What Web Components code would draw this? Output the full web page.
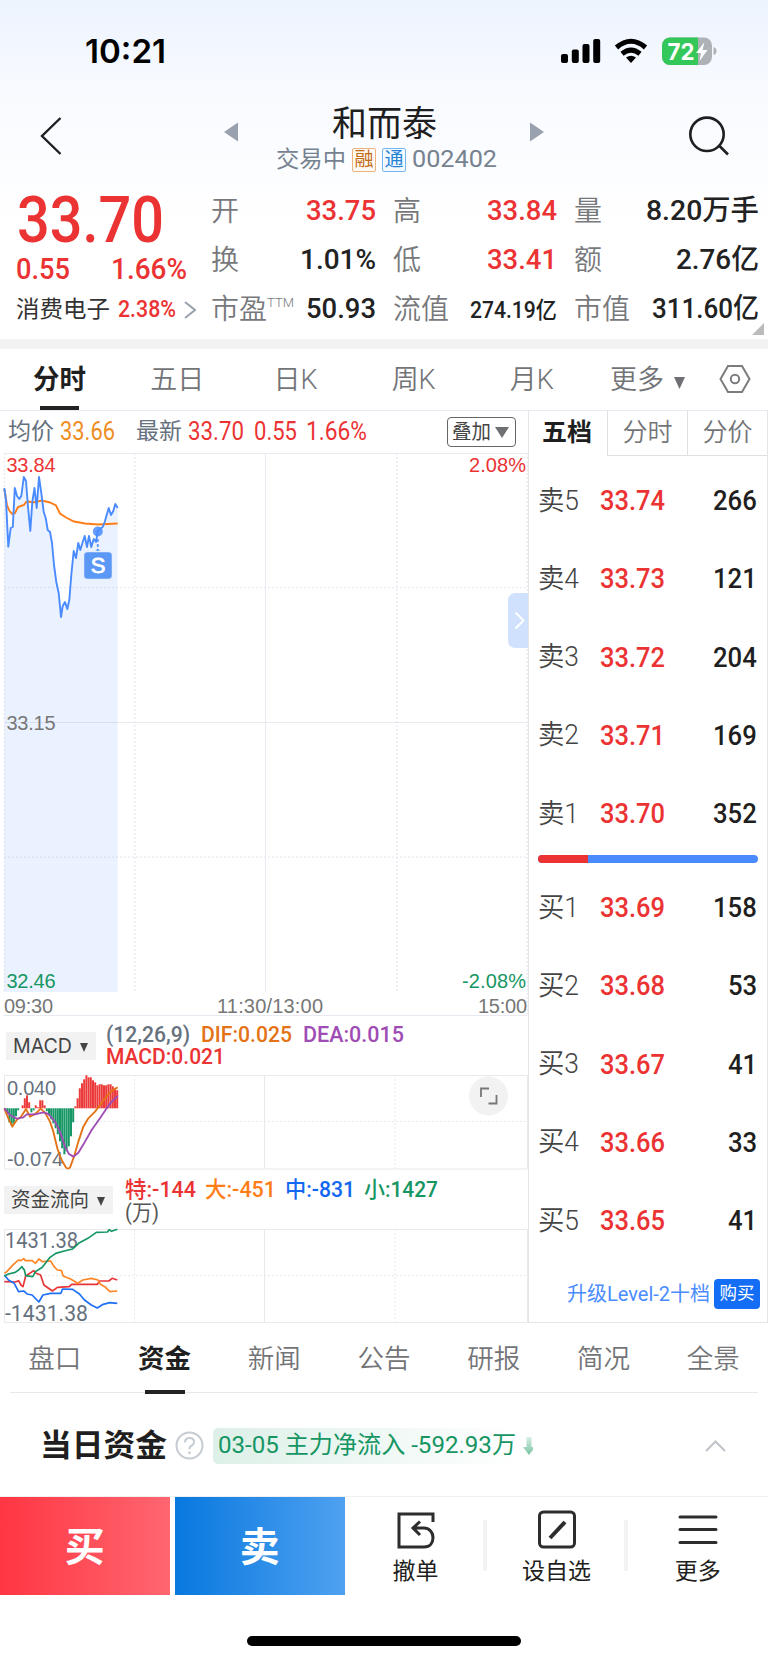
<!DOCTYPE html>
<html lang="zh-CN">
<head>
<meta charset="utf-8">
<title>和而泰 002402</title>
<style>
  body {
    margin: 0;
    width: 768px;
    height: 1663px;
    overflow: hidden;
    background: #fff linear-gradient(#edf4fe, #f8faff 90px, #fff 230px) no-repeat;
    color: #222;
    font-family: Roboto, "Noto Sans CJK SC", sans-serif;
    -webkit-font-smoothing: antialiased;
  }
</style>
</head>
<body>
<stock-page></stock-page>

<script>
const UP = "#eb3333";
const DOWN = "#159663";

function define(name, html, setup) {
  const template = document.createElement("template");
  template.innerHTML = html;
  customElements.define(
    name,
    class extends HTMLElement {
      constructor() {
        super();
        this.attachShadow({ mode: "open" }).appendChild(
          template.content.cloneNode(true)
        );
      }
      connectedCallback() {
        if (setup) setup(this, this.shadowRoot);
      }
    }
  );
}

/* Text squeezed or stretched horizontally to the width given in "w". */
define(
  "fit-text",
  `
<style>
  :host { display: inline-block; white-space: nowrap; line-height: 1.2; flex: none; text-align: left; }
  span { display: inline-block; transform-origin: 0 50%; }
</style>
<span><slot></slot></span>`,
  (host, root) => {
    const width = Number(host.getAttribute("w"));
    const span = root.querySelector("span");
    host.style.width = `${width}px`;
    span.style.transform = `scaleX(${width / span.getBoundingClientRect().width})`;
  }
);

define(
  "status-bar",
  `
<style>
  :host { display: flex; align-items: center; height: 103px; box-sizing: border-box; padding: 0 51px 2px 85px; color: #000; }
  .time { font: 600 33px Inter, sans-serif; margin-right: auto; }
  svg { display: block; }
</style>
<fit-text class="time" w="81">10:21</fit-text>
<svg width="157" height="30" viewBox="560 36 157 30">
  <g><rect x="561" y="54" width="7" height="9" rx="2"/><rect x="571.8" y="49.500" width="7" height="13.500" rx="2"/>
  <rect x="582.5" y="44" width="7" height="19" rx="2"/><rect x="593.200" y="39" width="7" height="24" rx="2"/></g>
  <g fill="none" stroke="#000" stroke-width="5">
    <path d="M616.500 47.500Q631 35 645.500 47.500"/><path d="M622 53.700Q631 46.500 640 53.700"/>
  </g>
  <path d="M626 57.500Q631 54 636 57.500L631 63Z"/>
  <clipPath id="b"><rect x="662" y="37.500" width="50" height="27.500" rx="8"/></clipPath>
  <g clip-path="url(#b)"><path fill="#aeb1b6" d="M662 37h50v29h-50z"/><path fill="#34c759" d="M662 37h36v29h-36z"/></g>
  <path fill="#aeb1b6" d="M713.500 47q3 1 3 4t-3 4z"/>
  <text x="667.500" y="60" font-family="Inter" font-weight="700" font-size="23.500" fill="#fff" textLength="27" lengthAdjust="spacingAndGlyphs">72</text>
  <path fill="#fff" d="M704.500 42L696 53h5l-1.500 8 8-11h-5z"/>
</svg>`
);

define(
  "stock-header",
  `
<style>
  :host { display: grid; grid-template-columns: 224px 1fr 224px; height: 74px; align-items: center; }
  svg { display: block; }
  .edge { margin-top: -8px; }
  .mid { display: flex; justify-content: space-between; align-items: center; margin-top: -16px; }
  .names { display: grid; justify-items: center; margin-top: 13px; }
  .title { font-size: 35px; height: 42px; line-height: 42px; color: #1f1f21; }
  .sub { display: flex; align-items: center; gap: 6px; color: #76828f; font-size: 23px; height: 28px; margin-left: 5px; }
  .sub fit-text { margin-top: 1px; }
  .badge { box-sizing: border-box; width: 24px; height: 24px; border: 1px solid; border-radius: 2px; font-size: 19px; line-height: 21px; text-align: center; }
  .rong { color: #c46a16; border-color: #eeb27c; background: #fff9f3; }
  .tong { color: #2583d5; border-color: #77b6ec; background: #f2f9ff; }
</style>
<svg class="edge" width="224" height="60" viewBox="0 106 224 60"><path d="M60.500 118L42 136l18.500 18" fill="none" stroke="#1f1f21" stroke-width="2.400"/></svg>
<div class="mid">
  <svg width="14" height="20"><path d="M0 10L14 .5v19z" fill="#98a1ad"/></svg>
  <div class="names">
    <fit-text class="title" w="105">和而泰</fit-text>
    <div class="sub">
      <fit-text w="70">交易中</fit-text>
      <span class="badge rong">融</span><span class="badge tong">通</span>
      <fit-text w="85">002402</fit-text>
    </div>
  </div>
  <svg width="14" height="20"><path d="M14 10L0 .5v19z" fill="#98a1ad"/></svg>
</div>
<svg class="edge" width="224" height="60" viewBox="544 106 224 60"><g fill="none" stroke="#1f1f21" stroke-width="2.600"><circle cx="707" cy="134.300" r="16.700"/><path d="M718.500 145L728 154.500"/></g></svg>`
);

define(
  "quote-stat",
  `
<style>
  :host { display: flex; align-items: center; justify-content: space-between; height: 49px; font-size: 28px; font-weight: 500; }
  .label { color: #77787b; font-weight: 350; font-size: 28px; margin-top: -2px; }
  .value { margin-top: 2px; }
</style>
<span class="label"><slot name="label"></slot></span><span class="value"><slot></slot></span>`
);

define(
  "quote-panel",
  `
<style>
  :host { display: flex; height: 162px; box-sizing: border-box; padding: 8px 8px 0 16px; position: relative; }
  .last { width: 195px; color: ${UP}; }
  .price { font-size: 65px; font-weight: 500; line-height: 67px; height: 67px; padding: 2px 0 0 1px; box-sizing: border-box; }
  .change { display: flex; justify-content: space-between; width: 171px; font-size: 29.500px; font-weight: 500; height: 35px; }
  .sector { display: flex; align-items: center; gap: 8px; height: 46px; font-size: 23px; font-weight: 500; }
  .sector .name { color: #333; font-weight: 400; }
  .stats { flex: 1; display: grid; grid-template-columns: 165px 164px 185px; column-gap: 17px; height: 147px; }
  .red { color: ${UP}; }
  .small { font-size: 23px; }
  sup { font-size: 13px; vertical-align: 12px; line-height: 0; }
  .corner { position: absolute; right: 4px; bottom: 4px; }
</style>
<div class="last">
  <fit-text class="price" w="147">33.70</fit-text>
  <div class="change"><fit-text w="54">0.55</fit-text><fit-text w="76">1.66%</fit-text></div>
  <div class="sector"><fit-text class="name" w="94">消费电子</fit-text><fit-text w="58">2.38%</fit-text>
    <svg width="12" height="18"><path d="M1 1l10 8-10 8" fill="none" stroke="#98a1ad" stroke-width="2"/></svg></div>
</div>
<div class="stats">
  <quote-stat><span slot="label">开</span><fit-text class="red" w="70">33.75</fit-text></quote-stat>
  <quote-stat><span slot="label">高</span><fit-text class="red" w="70">33.84</fit-text></quote-stat>
  <quote-stat><span slot="label">量</span><fit-text w="113">8.20万手</fit-text></quote-stat>
  <quote-stat><span slot="label">换</span><fit-text w="76">1.01%</fit-text></quote-stat>
  <quote-stat><span slot="label">低</span><fit-text class="red" w="70">33.41</fit-text></quote-stat>
  <quote-stat><span slot="label">额</span><fit-text w="83">2.76亿</fit-text></quote-stat>
  <quote-stat><span slot="label">市盈<sup>TTM</sup></span><fit-text w="70">50.93</fit-text></quote-stat>
  <quote-stat><span slot="label">流值</span><fit-text class="small" w="87">274.19亿</fit-text></quote-stat>
  <quote-stat><span slot="label">市值</span><fit-text w="107">311.60亿</fit-text></quote-stat>
</div>
<svg class="corner" width="12" height="12"><path d="M12 0v12H0z" fill="#bbb"/></svg>`
);

define(
  "chart-tabs",
  `
<style>
  :host { display: flex; align-items: center; height: 72px; box-sizing: border-box; border-top: 10px solid #f2f2f2; border-bottom: 1px solid #e8e8f3; padding: 0 17px 0 0; font-size: 27px; font-weight: 350; color: #737477; }
  div { flex: none; width: 118.200px; text-align: center; height: 61px; line-height: 62px; }
  .on { color: #1f1f21; font-weight: 700; display: flex; flex-direction: column; align-items: center; }
  .on fit-text { height: 57px; line-height: 62px; }
  .on::after { content: ""; width: 39px; height: 4px; background: #222; }
  .more { display: flex; align-items: center; width: 92px; margin-left: 19px; gap: 10px; }
  svg { flex: none; margin-left: auto; }
  .more svg { margin: 6px 0 0; }
</style>
<div class="on"><fit-text w="53">分时</fit-text></div><div>五日</div><div>日K</div><div>周K</div><div>月K</div>
<div class="more"><span>更多</span><svg width="11" height="12"><path d="M0 0h11L5.500 12z" fill="#6f7073"/></svg></div>
<svg width="32" height="30" viewBox="0 0 32 30"><g fill="none" stroke="#7b7c7f" stroke-width="2"><path d="M9 1h14l7.500 13L23 27H9L1.500 14z"/><circle cx="16" cy="14" r="4.200"/></g></svg>`
);

define(
  "price-legend",
  `
<style>
  :host { display: flex; align-items: center; height: 42px; box-sizing: border-box; padding: 0 12px 0 8px; font-size: 25px; color: ${UP}; }
  .label { color: #66717e; font-size: 23px; }
  .avg { color: #ee8d24; margin: 0 21px 0 6px; }
  .last { margin: 0 10px 0 6px; }
  button { all: unset; box-sizing: border-box; margin-left: auto; width: 69px; height: 30px; border: 1.500px solid #666; border-radius: 4px; display: flex; align-items: center; gap: 4px; padding-left: 4px; font-size: 20px; color: #444; }
</style>
<fit-text class="label" w="46">均价</fit-text><fit-text class="avg" w="55">33.66</fit-text>
<fit-text class="label" w="46">最新</fit-text><fit-text class="last" w="56">33.70</fit-text>
<fit-text style="margin-right:9px" w="43">0.55</fit-text><fit-text w="61">1.66%</fit-text>
<button><fit-text w="39">叠加</fit-text><svg width="14" height="11"><path d="M0 0h14L7 11z" fill="#6f7073"/></svg></button>`
);

define(
  "intraday-chart",
  `
<style>
  :host { display: block; height: 563px; }
  svg { display: block; }
  text { font-family: "Liberation Sans", sans-serif; font-size: 20px; }
</style>
<svg width="528" height="563" viewBox="0 453 528 563">
  <g fill="none" stroke="#e9e9f2" stroke-width="1">
    <path d="M4 453.500h523M265.500 453v539M4 722.500h523M4 1015.500h523"/>
    <path stroke-dasharray="2 2" stroke-width="1.300" d="M4.500 453v539M134.800 453v539M397 453v539M527.300 453v562M4 587.600h523M4 857.200h523"/>
  </g>
  <path id="area" fill="#4a8cff" fill-opacity=".11"/>
  <path fill="none" stroke="#ff7d18" stroke-width="1.900" d="M4.300 489L7 505l2 5 3 4 3-1 3-6 6-2 2-3 3-.500 4 1 4-1 5-1 8 2 6 3 4 8 6 4 8 4 11 2 13 1 19.700-1"/>
  <path id="line" fill="none" stroke="#4a8cff" stroke-width="1.900" stroke-linejoin="round"/>
  <circle cx="97.800" cy="531.500" r="5" fill="#4a8cff" fill-opacity=".85"/>
  <path stroke="#5b97f5" stroke-width="1.800" stroke-dasharray="3 2" d="M97.800 539v11"/>
  <path fill="#5b97f5" d="M94 552.500l3.800-4 3.800 4z"/><rect x="83.500" y="551.500" width="29" height="28" rx="4" fill="#5b97f5" stroke="#e6effd" stroke-width="1.500"/>
  <text x="98" y="573" text-anchor="middle" fill="#fff" stroke="#fff" stroke-width=".8" style="font-size:22px">S</text>
  <text x="6.500" y="472" fill="${UP}" textLength="49">33.84</text>
  <text x="469" y="472" fill="${UP}" textLength="57">2.08%</text>
  <text x="6.500" y="730" fill="#777" textLength="49">33.15</text>
  <text x="6.500" y="988" fill="${DOWN}" textLength="49">32.46</text>
  <text x="462" y="988" fill="${DOWN}" textLength="64">-2.08%</text>
  <g fill="#777"><text x="4" y="1013" textLength="49">09:30</text><text x="217" y="1013" textLength="106">11:30/13:00</text><text x="478" y="1013" textLength="49">15:00</text></g>
  <path fill="#cfe1fc" d="M528 593v55h-12q-8 0-8-8v-39q0-8 8-8z"/><path fill="none" stroke="#fff" stroke-width="2" d="M515.500 612.500l8 8-8 8"/>
</svg>`,
  (host, root) => {
    const points =
      "4.3,488 6,500 8.300,546.700 10.700,528 12.800,527 14.800,488 17,496 19.300,499 21.300,496 23.800,477 26,481 28,507 30.300,531 32.300,502 34.500,488 36.700,508 39,477 41.300,493 43.700,512 45.700,518 47.700,530 50,532 52,543 54,565 56.300,582 58.700,593 61,617 62.700,606 65,602 67.300,609 69.300,600 71.300,575 73.700,551 76,558 78.300,543 80.300,550 82.700,542 84.700,536 87,547 89,536 91.300,547 93.700,539 96,542 97.700,531 100,529 102.700,527 104.700,522 108.700,508 111,515 113.300,511 115.300,504 117.700,508";
    root.getElementById("line").setAttribute("d", `M${points}`);
    root.getElementById("area").setAttribute("d", `M4.300,992 ${points} 117.700,992z`);
  }
);

define(
  "indicator-head",
  `
<style>
  :host { display: flex; height: 59px; font-size: 22px; }
  .picker { display: flex; align-items: center; box-sizing: border-box; height: 28px; margin: 16px 0 0 var(--x, 6px); padding: 0 8px 0 7px; gap: 8px; background: #f2f2f2; color: #444; font-size: 20.500px; }
  .values { display: flex; flex-wrap: wrap; align-content: flex-start; flex: 1; height: 42px; margin: 8px 0 0 var(--inset, 10px); column-gap: var(--gap, 11px); font-weight: 500; }
  svg { margin-top: 3px; }
</style>
<div class="picker"><slot name="picker"></slot><svg width="8" height="9"><path d="M0 0h8L4 9z" fill="#444"/></svg></div>
<div class="values"><slot></slot></div>`
);

define(
  "macd-chart",
  `
<style>
  :host { display: block; height: 95px; }
  svg { display: block; overflow: visible; }
  text { font: 20px "Liberation Sans", sans-serif; fill: #66717e; }
</style>
<svg width="528" height="95" viewBox="0 1075 528 95">
  <g fill="none" stroke="#e9e9ec"><path d="M4.500 1075.500h523v93.500h-523zM264.500 1075v94"/>
  <path stroke-dasharray="2 2" d="M134.500 1075v94M395 1075v94M4 1121.500h523"/></g>
  <text x="7" y="1094.500" textLength="49">0.040</text><text x="7" y="1165.500" textLength="56">-0.074</text>
  <g id="bars"></g>
  <g fill="none" stroke-width="5.600" stroke-linejoin="round" transform="translate(0 1060) scale(.3333)">
    <path stroke="#e37316" d="M13 145L25 175 37 200 50 180 62 172 78 147 90 170 108 160 122 146 135 158 150 185 160 215 172 265 185 300 198 323Q204 328 210 323L222 290 235 245 250 200 265 175 285 155 300 135 315 115 335 92 353 82"/>
    <path stroke="#a04cb5" d="M13 145L30 165 50 176 70 172 80 163 105 163 130 157 145 162 165 185 180 215 195 260 207 282 220 290 235 278 255 245 275 210 300 175 320 145 335 125 353 108"/>
  </g>
  <circle cx="488.500" cy="1096" r="19.500" fill="#f2f2f2"/><path fill="none" stroke="#777" stroke-width="1.800" d="M481 1097v-8.500h8M496.500 1095v8.500h-8"/>
</svg>`,
  (host, root) => {
    const values = [-1, -6, -14, -17, -15, -8, -2, 0, 3, 10, 13, 6, -4, -2, 3, 1, 8, 8, 3, -3, -7, -11, -15, -20, -26, -33, -40, -46, -43, -38, -28, -14, 2, 10, 20, 25, 29, 33, 31, 31, 28, 26, 23, 24, 24, 23, 23, 24, 24, 22, 20, 18];
    root.getElementById("bars").innerHTML = values
      .map((v, i) => {
        const y = v > 0 ? 1108.3 - v : 1108.3;
        return `<rect x="${4 + i * 2.2}" y="${y}" width="2" height="${Math.abs(v)}" fill="${v > 0 ? "#ec3a3a" : DOWN}"/>`;
      })
      .join("");
  }
);

define(
  "flow-chart",
  `
<style>
  :host { display: block; height: 94px; }
  svg { display: block; overflow: visible; }
  text { font: 22.500px Roboto, sans-serif; fill: #66717e; }
</style>
<svg width="528" height="94" viewBox="0 1229 528 94">
  <g fill="none" stroke="#e9e9ec"><path d="M4.500 1229.500h523v93h-523zM264.500 1229v93"/>
  <path stroke-dasharray="2 2" d="M134.500 1229v93M395 1229v93M4 1275.500h523"/></g>
  <text x="5" y="1248" textLength="73" lengthAdjust="spacingAndGlyphs">1431.38</text><text x="5" y="1320.500" textLength="83" lengthAdjust="spacingAndGlyphs">-1431.38</text>
  <g fill="none" stroke-width="5" stroke-linejoin="round" transform="translate(0 1170) scale(.338 .3333)">
    <path stroke="#e83538" d="M13 335L45 336 55 332 62 345 68 350 76 318 100 302 105 309 120 315 130 345 155 363 170 352 205 350 212 343 288 343 295 333 322 333 332 325 347 330"/>
    <path stroke="#ff8626" d="M13 310L20 305 40 283 55 270 62 272 70 266 75 272 95 272 105 280 115 267 125 275 150 273 160 290 170 300 182 302 187 318 210 328 230 340 245 330 270 325 290 330 297 343 310 350 325 365 347 363"/>
    <path stroke="#1f70f5" d="M13 315L25 330 42 340 55 365 70 363 80 372 95 375 115 396 127 375 150 370 180 370 185 357 215 358 235 372 250 390 270 405 288 414 305 403 325 398 347 400"/>
    <path stroke="#159663" d="M13 318L25 312 45 307 55 300 65 290 72 300 76 317 97 320 105 305 125 292 147 263 165 250 190 243 215 237 235 218 260 205 285 187 318 186 323 179 330 184 347 178"/>
  </g>
</svg>`
);

define(
  "chart-column",
  `
<style>
  :host { display: block; width: 528px; }
  .red { color: ${UP}; } .gray { color: #66717e; } .dif { color: #e37316; } .dea { color: #a04cb5; }
  .big { color: #ff7d18; } .mid { color: #1467f0; } .small { color: ${DOWN}; }
  .latin { font-family: Inter, sans-serif; }
  .flow { --x: 4px; --gap: 9px; --inset: 12px; }
  .flow fit-text { line-height: 23px; }
  .macd fit-text { line-height: 22px; }
</style>
<price-legend></price-legend>
<intraday-chart></intraday-chart>
<indicator-head class="macd">
  <fit-text slot="picker" class="latin" w="59">MACD</fit-text>
  <fit-text class="gray" w="84">(12,26,9)</fit-text><fit-text class="dif" w="91">DIF:0.025</fit-text><fit-text class="dea" style="margin-right:90px" w="101">DEA:0.015</fit-text>
  <fit-text class="red" w="119">MACD:0.021</fit-text>
</indicator-head>
<macd-chart></macd-chart>
<indicator-head class="flow">
  <fit-text slot="picker" w="78">资金流向</fit-text>
  <fit-text class="red" w="71">特:-144</fit-text><fit-text class="big" w="71">大:-451</fit-text><fit-text class="mid" w="70">中:-831</fit-text><fit-text class="small" style="margin-right:60px" w="74">小:1427</fit-text>
  <fit-text w="34" style="color:#555;font-weight:400">(万)</fit-text>
</indicator-head>
<flow-chart></flow-chart>`
);

define(
  "order-row",
  `
<style>
  :host { display: flex; align-items: center; height: 78.200px; padding: 0 10px 0 9px; font-size: 28px; font-weight: 500; color: #1f1f21; }
  .side { color: #444; font-weight: 350; font-size: 27px; width: 62px; }
  .price { color: ${UP}; margin-right: auto; }
</style>
<span class="side"></span><span class="price"></span><span class="qty"></span>`,
  (host, root) => {
    const qty = host.getAttribute("qty");
    root.querySelector(".side").innerHTML = `<fit-text w="41">${host.getAttribute("side")}</fit-text>`;
    root.querySelector(".price").innerHTML = `<fit-text w="65">${host.getAttribute("price")}</fit-text>`;
    root.querySelector(".qty").innerHTML = `<fit-text w="${qty.length * 14.6}">${qty}</fit-text>`;
  }
);

define(
  "order-book",
  `
<style>
  :host { display: flex; flex-direction: column; width: 240px; height: 912px; box-sizing: border-box; border: 1px solid #e6e6ea; border-top: 0; }
  .tabs { display: grid; grid-template-columns: 78px 80px 80px; height: 44px; flex: none; font-size: 25px; font-weight: 350; color: #737477; text-align: center; line-height: 44px; }
  .tabs > * { border-left: 1px solid #e0e0e3; border-bottom: 1px solid #e0e0e3; }
  .tabs .on { border-color: transparent; border-left: 0; color: #1f1f21; font-weight: 700; }
  .tabs .on { padding-right: 2px; }
  .rows { padding-top: 7px; }
  .ratio { display: flex; height: 8px; margin: 2px 9px 6px 9px; border-radius: 4px; overflow: hidden; background: #4a8cff; }
  .ratio::before { content: ""; width: 50px; background: ${UP}; }
  .up { display: flex; align-items: center; justify-content: flex-end; gap: 4px; margin-top: 19px; padding-right: 7px; color: #4a8cff; font-size: 20px; }
  .buy { width: 46px; height: 30px; line-height: 29px; border-radius: 4px; background: #146df5; color: #fff; text-align: center; font-size: 17.500px; }
</style>
<div class="tabs"><span class="on">五档</span><span>分时</span><span>分价</span></div>
<div class="rows">
  <order-row side="卖5" price="33.74" qty="266"></order-row>
  <order-row side="卖4" price="33.73" qty="121"></order-row>
  <order-row side="卖3" price="33.72" qty="204"></order-row>
  <order-row side="卖2" price="33.71" qty="169"></order-row>
  <order-row side="卖1" price="33.70" qty="352"></order-row>
  <div class="ratio"></div>
  <order-row side="买1" price="33.69" qty="158"></order-row>
  <order-row side="买2" price="33.68" qty="53"></order-row>
  <order-row side="买3" price="33.67" qty="41"></order-row>
  <order-row side="买4" price="33.66" qty="33"></order-row>
  <order-row side="买5" price="33.65" qty="41"></order-row>
</div>
<div class="up"><fit-text w="143">升级Level-2十档</fit-text><span class="buy">购买</span></div>`
);

define(
  "section-tabs",
  `
<style>
  :host { display: grid; grid-template-columns: repeat(7, 1fr); height: 70px; box-sizing: border-box; font-size: 26.500px; font-weight: 350; color: #737477; background: linear-gradient(#e8e8ea, #e8e8ea) 10px 100% / 748px 1px no-repeat; }
  span { text-align: center; line-height: 71px; }
  .on { color: #1f1f21; font-weight: 700; background: linear-gradient(#222, #222) 50% 100% / 40px 4px no-repeat; }
</style>
<span>盘口</span><span class="on">资金</span><span>新闻</span><span>公告</span><span>研报</span><span>简况</span><span>全景</span>`
);

define(
  "funds-summary",
  `
<style>
  :host { display: flex; align-items: center; height: 104px; box-sizing: border-box; padding: 2px 42px 0 40px; border-bottom: 1px solid #f0f0f0; }
  .title { font-size: 31px; font-weight: 700; color: #1f1f21; }
  .help { margin: 0 9px 0 8px; }
  .flow { display: flex; align-items: center; gap: 7px; width: 320px; height: 36px; padding-left: 5px; box-sizing: border-box; border-radius: 5px; background: linear-gradient(90deg, #ddf0e8, #fff 96%); color: ${DOWN}; font-size: 24px; }
  .up { margin-left: auto; }
</style>
<fit-text class="title" w="127">当日资金</fit-text>
<svg class="help" width="29" height="29"><circle cx="14.500" cy="14.500" r="13" fill="none" stroke="#c7ccd2" stroke-width="2"/><path d="M10 11.500q0-4.500 4.500-4.500t4.500 4q0 2.200-2.400 3.700t-2.100 3.500" fill="none" stroke="#c7ccd2" stroke-width="2"/><circle cx="14.500" cy="21.800" r="1.400" fill="#c7ccd2"/></svg>
<div class="flow"><fit-text w="298">03-05 主力净流入 -592.93万</fit-text>
  <svg width="12" height="18"><defs><linearGradient id="a" x2="0" y2="1"><stop stop-color="#d7eee4"/><stop offset="1" stop-color="#78c3a3"/></linearGradient></defs><path fill="url(#a)" d="M3.500 0h5v10H12l-6 8-6-8h3.500z"/></svg></div>
<svg class="up" width="21" height="12"><path d="M1 11L10.500 1.500 20 11" fill="none" stroke="#bfc4ca" stroke-width="2"/></svg>`
);

define(
  "tool-button",
  `
<style>
  :host { display: grid; justify-items: center; align-content: start; flex: 1; height: 98px; box-sizing: border-box; padding-top: 12px; font-size: 23px; color: #1f1f21; }
  .label { margin-top: 7px; line-height: 32px; }
</style>
<slot name="icon"></slot><span class="label"><slot></slot></span>`
);

define(
  "trade-bar",
  `
<style>
  :host { display: flex; align-items: flex-start; height: 139px; }
  .side { flex: none; width: 169.500px; height: 98px; line-height: 101px; color: #fff; font-size: 40px; font-weight: 700; text-align: center; }
  .buy { background: linear-gradient(90deg, #ff3643, #ff6670); margin-right: 5.500px; }
  .sell { background: linear-gradient(90deg, #0878df, #4fa1f0); }
  i { width: 4px; height: 51px; margin-top: 23px; background: #f3f3f3; }
  svg { display: block; }
  g { fill: none; stroke: #2d2d2f; stroke-width: 3; }
</style>
<span class="side buy">买</span><span class="side sell">卖</span>
<tool-button style="flex:none;width:138px;padding-left:4px"><svg slot="icon" width="40" height="40"><g><path d="M37 13V5H3v33h25c6 0 9-4 9-9.500S33 19 28 19H17M24 12.500L17 19l7 7"/></g></svg>撤单</tool-button><i></i>
<tool-button style="flex:none;width:137px;padding-left:3px"><svg slot="icon" width="40" height="40"><g><rect x="2.500" y="3" width="35" height="35" rx="4"/><path stroke-width="4" d="M13 29L28 13"/></g></svg>设自选</tool-button><i></i>
<tool-button><svg slot="icon" width="40" height="40"><g stroke-linecap="round"><path d="M2 8h36M2 20.500h36M2 33.500h36"/></g></svg>更多</tool-button>`
);

define(
  "stock-page",
  `
<style>
  :host { display: block; width: 768px; height: 1663px; overflow: hidden; }
  .board { display: flex; height: 912px; }
  .home { width: 274px; height: 10px; margin: 0 auto; border-radius: 5px; background: #000; }
</style>
<status-bar></status-bar>
<stock-header></stock-header>
<quote-panel></quote-panel>
<chart-tabs></chart-tabs>
<div class="board"><chart-column></chart-column><order-book></order-book></div>
<section-tabs></section-tabs>
<funds-summary></funds-summary>
<trade-bar></trade-bar>
<div class="home"></div>`
);
</script>
</body>
</html>
